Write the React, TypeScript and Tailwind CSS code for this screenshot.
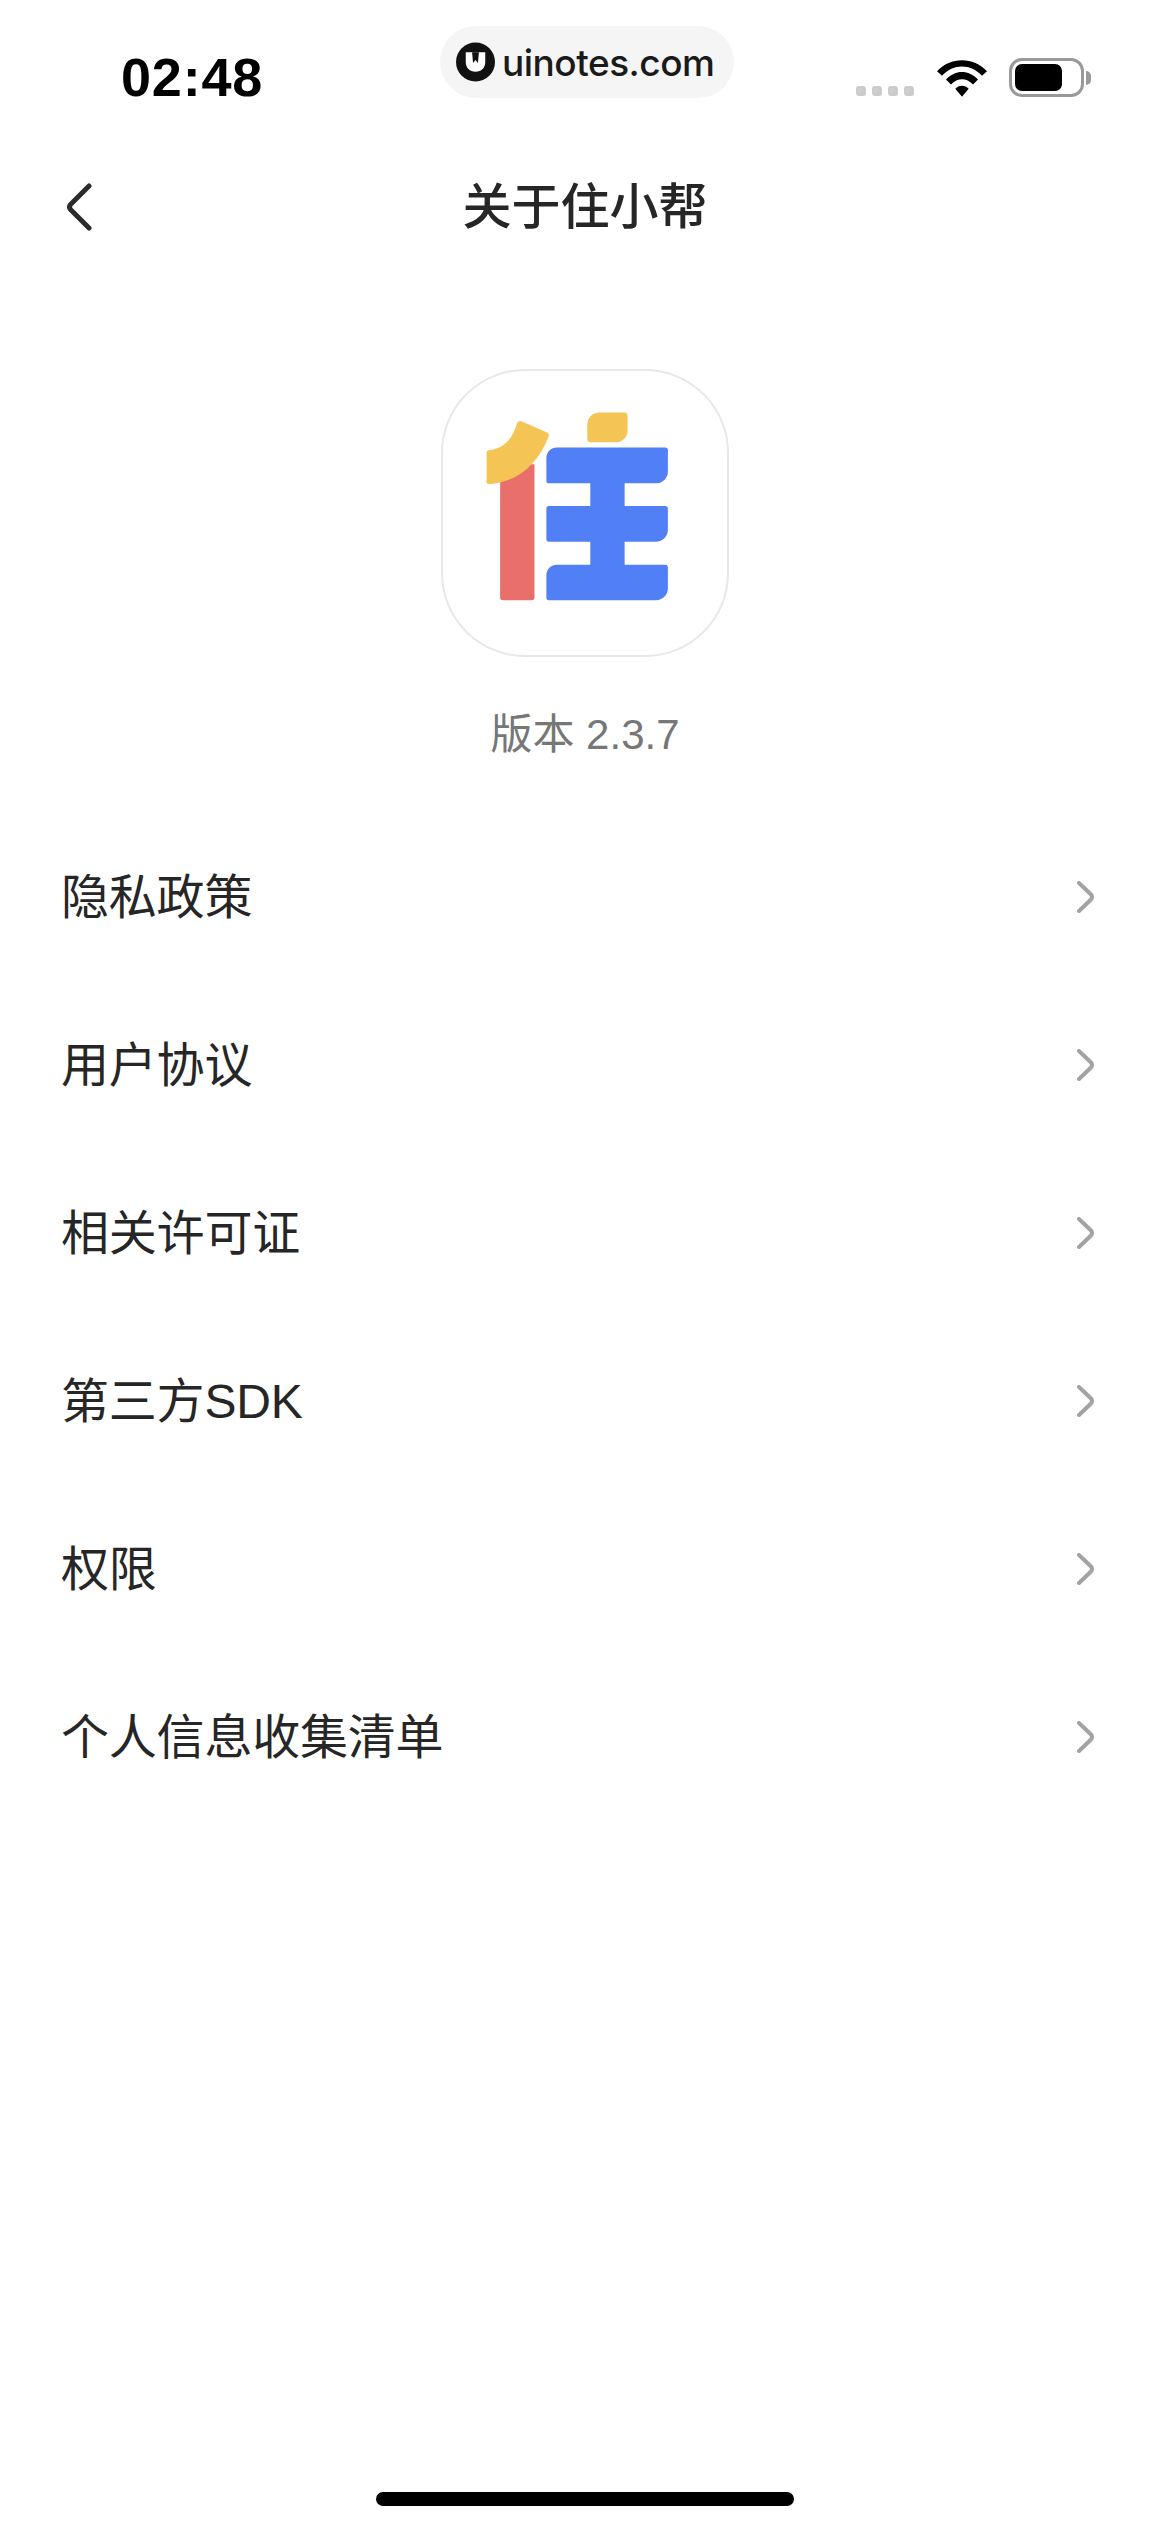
const rows = ["隐私政策", "用户协议", "相关许可证", "第三方SDK", "权限", "个人信息收集清单"]

function StatusBar() {
  return (
    <div className="relative h-[120px] shrink-0">
      <div className="flex items-start justify-between pl-[121px] pr-[79px] pt-[45px]">
        <span className="text-[54px] leading-[64px] font-bold text-black tracking-[0.8px] font-['Liberation_Sans',sans-serif]">02:48</span>
        <div className="flex items-end pt-[13px]">
          <div className="flex gap-[6px] mb-[1px]">
            <div className="w-[10px] h-[10px] rounded-[3px] bg-[#cccccc]" />
            <div className="w-[10px] h-[10px] rounded-[3px] bg-[#cccccc]" />
            <div className="w-[10px] h-[10px] rounded-[3px] bg-[#cccccc]" />
            <div className="w-[10px] h-[10px] rounded-[3px] bg-[#cccccc]" />
          </div>
          <svg className="ml-[23px]" width="50" height="37" viewBox="0 0 150 110" fill="black">
            <path d="M0 33C40 -11 110 -11 150 33L135 47C100 10 50 10 15 47Z" />
            <path d="M27 58C55 28 95 28 123 58L108 73C88 52 62 52 42 73Z" />
            <path d="M55 86C65 74 85 74 95 86L75 110Z" />
          </svg>
          <div className="ml-[22px] w-[75px] h-[39px] rounded-[13px] border-[3px] border-[#999999] p-[3px]">
            <div className="w-[47px] h-full rounded-[7px] bg-black" />
          </div>
          <div className="w-[5px] h-[14px] mb-[12px] ml-[2px] rounded-r-full bg-[#999999]" />
        </div>
      </div>

      {/* watermark */}
      <div className="absolute left-[440px] top-[26px] w-[294px] h-[72px] rounded-[36px] bg-[#f5f5f5] flex items-center pl-[16px] gap-[7px]">
        <svg width="39" height="40" viewBox="0 0 40 40">
          <circle cx="20" cy="20" r="20" fill="#111111" />
          <path d="M10 10H30V20C30 26 26 30 20 30C14 30 10 26 10 20Z" fill="white" />
          <path d="M16.5 10H23.5L22.5 21L20 18L17.5 21Z" fill="#111111" />
        </svg>
        <span className="text-[37px] leading-none font-medium text-[#1a1a1a] font-['Inter',sans-serif] tracking-[-0.5px]">uinotes.com</span>
      </div>
    </div>
  )
}

function AppIcon() {
  return (
    <div className="w-[288px] h-[288px] rounded-[84px] border-2 border-[#e8e8e8] bg-white overflow-hidden">
      <svg className="w-full h-full" viewBox="68 58 854 860">
        <path d="M238 340H342V744Q342 752 334 752H246Q238 752 238 744Z" fill="#e96f6a" />
        <path d="M205 298C250 292 275 265 290 215Q295 207 303 210L380 244Q388 248 385 256C350 345 290 392 205 401Q197 401 197 392V306Q197 298 205 298Z" fill="#f4c555" />
        <path d="M538 184H614Q624 184 624 194V238C624 258 608 274 588 274H512Q502 274 502 264V220C502 200 518 184 538 184Z" fill="#f4c555" />
        <path d="M410 290H738Q746 290 746 298V362C746 382 730 398 710 398H615V467H738Q746 467 746 475V539C746 559 730 575 710 575H615V645H738Q746 645 746 653V716C746 736 730 752 710 752H386Q378 752 378 744V677C378 659 392 645 410 645H511V575H386Q378 575 378 567V475Q378 467 386 467H511V398H386Q378 398 378 390V322C378 304 392 290 410 290Z" fill="#507ff6" />
      </svg>
    </div>
  )
}

export default function App() {
  return (
    <div className="min-h-[2532px] flex flex-col bg-white font-['Liberation_Sans','Noto_Sans_CJK_SC',sans-serif] text-[#262626]">
      <StatusBar />

      {/* Header */}
      <div className="h-[174px] shrink-0 grid grid-cols-[1fr_auto_1fr] items-center pl-[66px]">
        <svg width="26" height="48" viewBox="0 0 26 48" fill="none" stroke="#2b2b2b" strokeWidth="5" strokeLinecap="round" strokeLinejoin="round">
          <path d="M23 3L4.5 21.5Q2.5 24 4.5 26.5L23 45" />
        </svg>
        <h1 className="text-[49px] leading-[52px] font-medium -ml-[66px]">关于住小帮</h1>
      </div>

      <div className="flex flex-col items-center pt-[75px]">
        <AppIcon />
        <p className="mt-[48px] text-[42px] leading-[60px] text-[#777777]">版本 2.3.7</p>
      </div>

      <div className="mt-[48px]">
        {rows.map((row) => (
          <div key={row} className="h-[168px] flex items-center justify-between pl-[61px] pr-[76px]">
            <span className="text-[48px] leading-[64px] pt-[2px] tracking-[-0.2px]">{row}</span>
            <svg width="17" height="32" viewBox="0 0 17 32" fill="none" stroke="#a3a3a3" strokeWidth="4" strokeLinecap="round" strokeLinejoin="round">
              <path d="M2 2L14 13.5Q16 16 14 18.5L2 30" />
            </svg>
          </div>
        ))}
      </div>

      <div className="mt-auto mb-[26px] mx-auto w-[418px] h-[14px] rounded-full bg-black" />
    </div>
  )
}
